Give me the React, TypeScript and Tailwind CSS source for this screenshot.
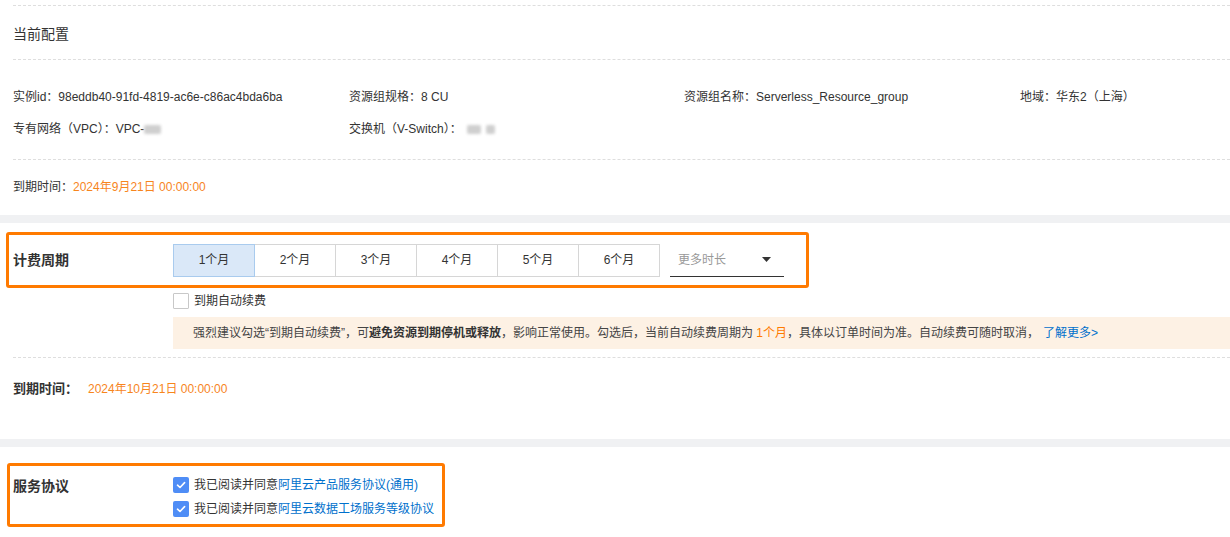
import React from 'react';

const FONT = "font-['Liberation_Sans','Noto_Sans_CJK_SC',sans-serif]";

const Checked: React.FC = () => (
  <span className="flex h-[16px] w-[16px] shrink-0 items-center justify-center rounded-[2px] bg-[#4f8df6]">
    <svg width="10" height="8" viewBox="0 0 10 8" fill="none">
      <path d="M1.5 4.2 L4 6.5 L8.6 1.6" stroke="white" strokeWidth="1.6" strokeLinecap="round" strokeLinejoin="round" />
    </svg>
  </span>
);

const Blob: React.FC<{ w: number }> = ({ w }) => (
  <span className="inline-block h-[9px] rounded-[2px] bg-[#cfcfcf] blur-[1.5px] align-middle" style={{ width: w }} />
);

const months = ['1个月', '2个月', '3个月', '4个月', '5个月', '6个月'];

const App: React.FC = () => {
  return (
    <div className={`${FONT} w-[1230px] h-[537px] overflow-hidden bg-white text-[12px] text-[#333]`}>
      {/* current config */}
      <section className="pl-[13px] pt-[5px]">
        <div className="flex h-[54px] items-center border-t border-dashed border-[#dedede] pt-[4px] text-[14px]">当前配置</div>
        <div className="h-[100px] border-t border-dashed border-[#dedede] pt-[27px]">
          <div className="flex h-[20px] items-center">
            <div className="w-[336px]">实例id：98eddb40-91fd-4819-ac6e-c86ac4bda6ba</div>
            <div className="w-[335px]">资源组规格：8 CU</div>
            <div className="w-[336px]">资源组名称：Serverless_Resource_group</div>
            <div>地域：华东2（上海）</div>
          </div>
          <div className="mt-[12px] flex h-[20px] items-center">
            <div className="flex w-[336px] items-center">专有网络（VPC）：VPC-<Blob w={17} /></div>
            <div className="flex items-center gap-[5px]">
              <span>交换机（V-Switch）：</span>
              <Blob w={14} />
              <Blob w={9} />
            </div>
          </div>
        </div>
        <div className="flex h-[56px] items-center border-t border-dashed border-[#dedede] pb-[2px]">
          到期时间：<span className="text-[#f7851d]">2024年9月21日 00:00:00</span>
        </div>
      </section>

      <div className="h-[8px] bg-[#f0f1f3]" />

      {/* billing period */}
      <section className="pt-[9px]">
        <div className="ml-[6px] flex h-[56px] w-[803px] items-center rounded-[3px] border-[3px] border-[#ff7a00] pl-[4px]">
          <div className="w-[160px] text-[14px] font-bold">计费周期</div>
          <div className="flex">
            {months.map((m, i) => (
              <div
                key={m}
                className={
                  i === 0
                    ? 'relative z-10 flex h-[33px] w-[82px] items-center justify-center border border-[#a9cbee] bg-[#dae8f8]'
                    : '-ml-px flex h-[33px] w-[82px] items-center justify-center border border-[#d6d6d6] bg-white'
                }
              >
                {m}
              </div>
            ))}
          </div>
          <div className="ml-[10px] flex h-[33px] w-[114px] items-center justify-between border-b border-[#333] pl-[8px] pr-[13px] text-[#999]">
            <span>更多时长</span>
            <svg width="9" height="5" viewBox="0 0 9 5">
              <path d="M0 0 H9 L4.5 5 Z" fill="#333" />
            </svg>
          </div>
        </div>

        <div className="ml-[173px] mt-[5px] flex h-[16px] items-center gap-[5px]">
          <span className="h-[16px] w-[16px] rounded-[1px] border border-[#c8c8c8] bg-white" />
          <span>到期自动续费</span>
        </div>
        <div className="ml-[173px] mt-[8px] flex h-[32px] items-center bg-[#fdf1e4] pl-[20px] text-[#444]">
          强烈建议勾选“到期自动续费”，可<b className="text-[#333]">避免资源到期停机或释放</b>，影响正常使用。勾选后，当前自动续费周期为&nbsp;<span className="text-[#ff7a00]">1个月</span>，具体以订单时间为准。自动续费可随时取消，
          <span className="ml-[4px] text-[#0070cc]">了解更多&gt;</span>
        </div>

        <div className="ml-[13px] mt-[8px] flex h-[82px] items-start border-t border-dashed border-[#dedede] pt-[22px]">
          <span className="w-[75px] text-[13px] font-bold leading-[18px]">到期时间：</span>
          <span className="leading-[18px] text-[#f7851d]">2024年10月21日 00:00:00</span>
        </div>
      </section>

      <div className="h-[8px] bg-[#f0f1f3]" />

      {/* agreement */}
      <section className="pt-[16px]">
        <div className="ml-[7px] flex w-[438px] rounded-[3px] border-[3px] border-[#ff7a00] pb-[7px] pl-[3px] pt-[11px]">
          <div className="w-[160px] pt-[1px] text-[14px] font-bold leading-[16px]">服务协议</div>
          <div className="flex flex-col gap-[8px]">
            <div className="flex h-[16px] items-center gap-[5px]">
              <Checked />
              <span>
                我已阅读并同意<span className="text-[#0070cc]">阿里云产品服务协议(通用)</span>
              </span>
            </div>
            <div className="flex h-[16px] items-center gap-[5px]">
              <Checked />
              <span>
                我已阅读并同意<span className="text-[#0070cc]">阿里云数据工场服务等级协议</span>
              </span>
            </div>
          </div>
        </div>
      </section>
    </div>
  );
};

export default App;
